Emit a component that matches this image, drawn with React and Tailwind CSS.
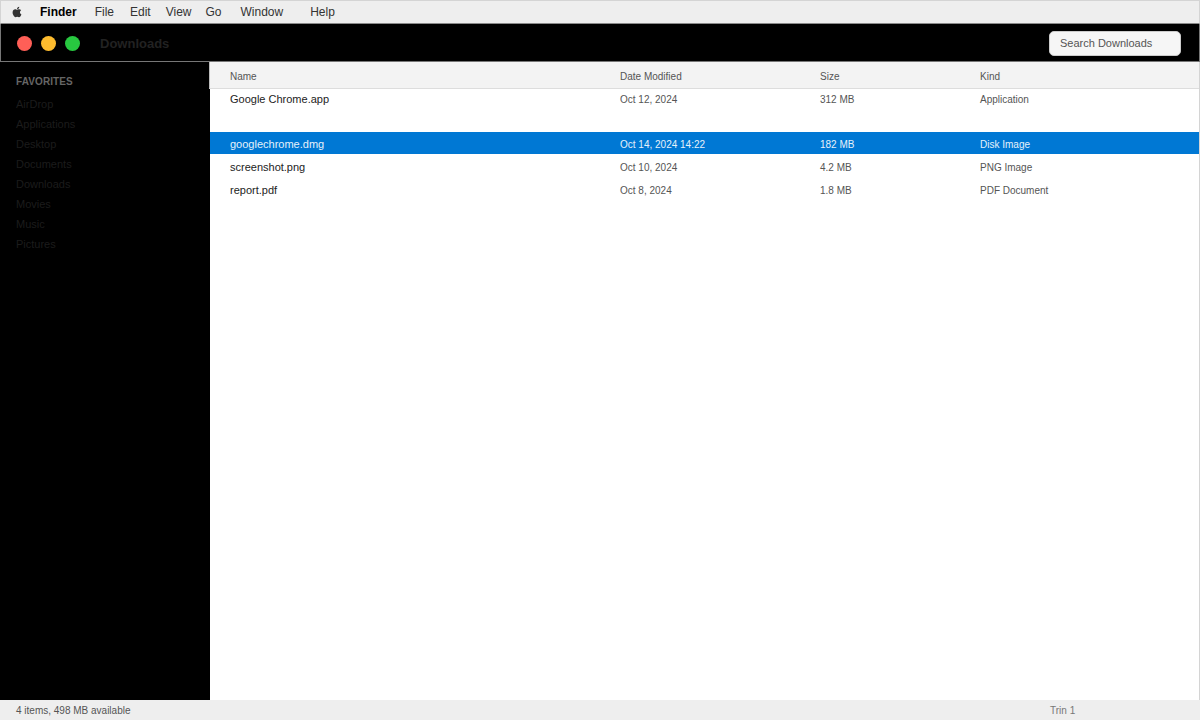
import { FaApple } from 'react-icons/fa';

const favorites = ['AirDrop', 'Applications', 'Desktop', 'Documents', 'Downloads', 'Movies', 'Music', 'Pictures'];

const files = [
  { name: 'Google Chrome.app', date: 'Oct 12, 2024', size: '312 MB', kind: 'Application', rowClass: 'h-[21px] mb-[22px]' },
  { name: 'googlechrome.dmg', date: 'Oct 14, 2024 14:22', size: '182 MB', kind: 'Disk Image', rowClass: 'h-[22px] mb-px pt-[2px]', selected: true },
  { name: 'screenshot.png', date: 'Oct 10, 2024', size: '4.2 MB', kind: 'PNG Image', rowClass: 'h-[23px] pt-[2px]' },
  { name: 'report.pdf', date: 'Oct 8, 2024', size: '1.8 MB', kind: 'PDF Document', rowClass: 'h-[23px] pt-[2px]' },
];

const App = () => {
  return (
    <div className="w-[1200px] h-[720px] flex flex-col overflow-hidden bg-white font-['Liberation_Sans',Arial,sans-serif]">
      {/* Menu bar */}
      <div className="h-6 shrink-0 flex items-center bg-[#eeeeee] border border-[#d4d4d4] border-b-[#8a8a8a] text-[12px] text-[#333333]">
        <FaApple className="ml-[10px] w-[12px] h-[12px] text-[#333333]" />
        <span className="ml-[17px] font-bold text-black">Finder</span>
        <span className="ml-[18px]">File</span>
        <span className="ml-[16px]">Edit</span>
        <span className="ml-[15px]">View</span>
        <span className="ml-[14px]">Go</span>
        <span className="ml-[19px]">Window</span>
        <span className="ml-[27px]">Help</span>
      </div>

      {/* Title bar */}
      <div className="h-[38px] shrink-0 flex items-center bg-black border border-t-0 border-[#777777] pt-px pl-[16px] pr-[18px]">
        <div className="flex gap-[9px]">
          <span className="w-[15px] h-[15px] rounded-full bg-[#ff5f57]" />
          <span className="w-[15px] h-[15px] rounded-full bg-[#febc2e]" />
          <span className="w-[15px] h-[15px] rounded-full bg-[#28c840]" />
        </div>
        <span className="ml-[20px] mt-px text-[13px] font-bold text-[#222222]">Downloads</span>
        <div className="ml-auto w-[132px] h-[25px] flex items-center px-[10px] rounded-[5px] bg-[#f6f6f6] border border-[#cccccc] text-[11px] text-[#555555]">
          Search Downloads
        </div>
      </div>

      <div className="flex-1 min-h-0 flex">
        {/* Sidebar */}
        <div className="w-[210px] shrink-0 bg-black pt-[12px] px-4">
          <div className="h-[14px] flex items-center text-[10px] tracking-[0.1px] font-bold text-[#666666]">FAVORITES</div>
          <div className="mt-[6px] flex flex-col text-[11px] text-[#1c1c1c]">
            {favorites.map((item) => (
              <div key={item} className="h-5 flex items-center">{item}</div>
            ))}
          </div>
        </div>

        {/* File list */}
        <div className="flex-1 min-w-0 border-r border-[#d4d4d4]">
          <div className="h-[27px] flex items-center pt-[2px] pl-5 bg-[#f3f3f3] border-b border-[#dddddd] border-l border-l-[#bbbbbb] -ml-px text-[10px] text-[#555555]">
            <span className="w-[390px]">Name</span>
            <span className="w-[200px]">Date Modified</span>
            <span className="w-[160px]">Size</span>
            <span>Kind</span>
          </div>
          {files.map((file) => (
            <div
              key={file.name}
              className={file.selected
                ? `${file.rowClass} flex items-center pl-5 bg-[#0078d4] text-[#e6f1fa]`
                : `${file.rowClass} flex items-center pl-5 text-[#555555]`}
            >
              <span className={file.selected ? 'w-[390px] text-[11px]' : 'w-[390px] text-[11px] text-[#222222]'}>{file.name}</span>
              <span className="w-[200px] text-[10px]">{file.date}</span>
              <span className="w-[160px] text-[10px]">{file.size}</span>
              <span className="text-[10px]">{file.kind}</span>
            </div>
          ))}
        </div>
      </div>

      {/* Status bar */}
      <div className="h-5 shrink-0 flex items-center bg-[#eeeeee] pl-4 text-[10px] text-[#555555]">
        <span className="w-[1034px]">4 items, 498 MB available</span>
        <span className="text-[#777777]">Trin 1</span>
      </div>
    </div>
  );
};

export default App;
